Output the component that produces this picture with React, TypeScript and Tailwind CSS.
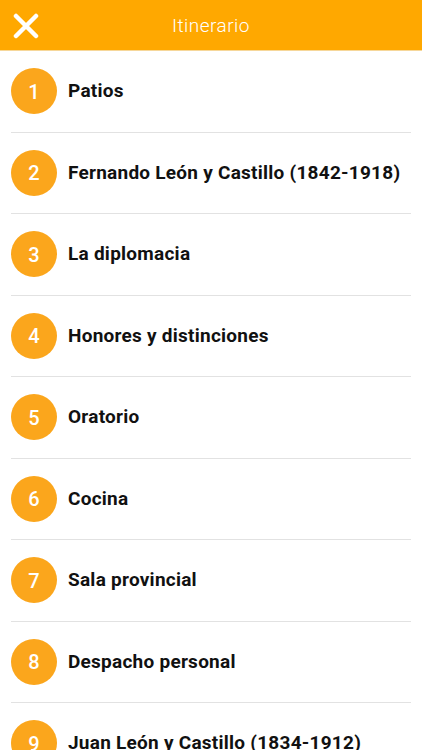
const ITEMS = [
  'Patios',
  'Fernando León y Castillo (1842-1918)',
  'La diplomacia',
  'Honores y distinciones',
  'Oratorio',
  'Cocina',
  'Sala provincial',
  'Despacho personal',
  'Juan León y Castillo (1834-1912)',
];

export default function App() {
  return (
    <div className="h-[750px] w-[422px] overflow-hidden bg-white font-['Roboto',sans-serif]">
      <header className="relative flex h-[51px] items-center justify-center border-b border-[#f6d79a] bg-[#ffa800] pt-[3px]">
        <button className="absolute left-[13px] top-[13px]">
          <svg width="26" height="26" viewBox="0 0 26 26">
            <path d="M3 3 L23 23 M23 3 L3 23" stroke="white" strokeWidth="4.5" strokeLinecap="round" />
          </svg>
        </button>
        <h1 className="text-[19px] font-light tracking-wide text-white">Itinerario</h1>
      </header>
      <ul>
        {ITEMS.map((label, i) => (
          <li key={label} className="mx-[11px]">
            <div className="flex h-[80.5px] items-center gap-[11px]">
              <span className="flex h-[46px] w-[46px] shrink-0 items-center justify-center rounded-full bg-[#fba61c] pt-px text-[20px] font-medium text-white">
                {i + 1}
              </span>
              <span className="text-[19px] font-bold tracking-[0.25px] text-[#111]">{label}</span>
            </div>
            <div className="h-px bg-[#e2e2e2]" />
          </li>
        ))}
      </ul>
    </div>
  );
}
